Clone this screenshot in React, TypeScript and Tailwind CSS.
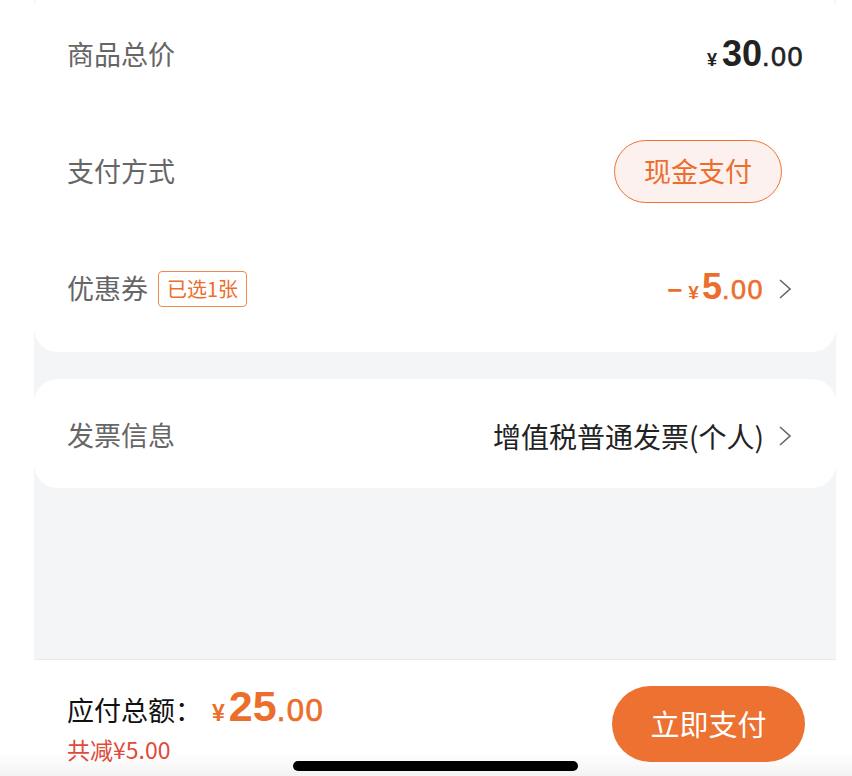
import React from 'react';

const cjk = { fontFamily: '"Noto Sans CJK SC", "Noto Sans", sans-serif' };
const num = { fontFamily: '"Liberation Sans", Arial, sans-serif' };

function Chevron() {
  return (
    <svg width="14" height="22" viewBox="0 0 14 22" className="ml-[14px] mr-[12px] shrink-0">
      <polyline points="2,2 12,11 2,20" fill="none" stroke="#666" strokeWidth="1.6" />
    </svg>
  );
}

function Row({ label, children, extra }: { label: string; children: React.ReactNode; extra?: React.ReactNode }) {
  return (
    <div className="h-[117px] flex items-center justify-between pl-[33px] pr-[32px]">
      <div className="flex items-center">
        <span className="text-[27px] text-[#666]">{label}</span>
        {extra}
      </div>
      <div className="flex items-center">{children}</div>
    </div>
  );
}

export default function App() {
  return (
    <div className="w-[852px] h-[776px] bg-white relative overflow-hidden flex flex-col" style={cjk}>
      <div className="ml-[34px] mr-[16px] h-[660px] bg-[#f4f5f7] border-b border-[#ebebeb] overflow-hidden shrink-0">
        <div className="bg-white rounded-3xl mt-[-14px] pt-[10px] pb-[5px]">
          <Row label="商品总价">
            <span className="text-[#222] flex items-baseline font-semibold" style={num}>
              <span className="text-[18px] mr-[5px]">¥</span>
              <span className="text-[36px] leading-none">30</span>
              <span className="text-[27px] leading-none tracking-[1.5px] font-normal [-webkit-text-stroke:0.6px_#222]">.00</span>
            </span>
          </Row>
          <Row label="支付方式">
            <div className="mr-[22px] h-[63px] w-[168px] rounded-full border-[1.5px] border-[#ee7331] bg-[#fcf1ee] flex items-center justify-center text-[27px] text-[#ec6e2c]">
              现金支付
            </div>
          </Row>
          <Row
            label="优惠券"
            extra={
              <span className="ml-[10px] h-[36px] px-[8px] border border-[#f08a4b] rounded-[4px] text-[#ec6e2c] text-[20px] flex items-center">
                已选1张
              </span>
            }
          >
            <span className="text-[#ec6e2c] flex items-baseline font-semibold" style={num}>
              <span className="text-[26px] leading-none mr-[6px]">−</span>
              <span className="text-[19px] mr-[3px]">¥</span>
              <span className="text-[36px] leading-none">5</span>
              <span className="text-[27px] leading-none tracking-[1.5px] font-normal [-webkit-text-stroke:0.6px_#ec6e2c]">.00</span>
            </span>
            <Chevron />
          </Row>
        </div>
        <div className="bg-white rounded-3xl mt-[27px] h-[109px] flex items-center justify-between pl-[33px] pr-[32px] pt-[4px]">
          <span className="text-[27px] text-[#666]">发票信息</span>
          <div className="flex items-center">
            <span className="text-[28px] text-[#222]">增值税普通发票(个人)</span>
            <Chevron />
          </div>
        </div>
      </div>
      <div className="flex-1 bg-linear-to-b from-white from-80% to-[#f3f3f3] flex items-start justify-between pl-[67px] pr-[47px]">
        <div className="flex flex-col pt-[25px]">
          <div className="flex items-baseline">
            <span className="text-[27px] text-[#111] leading-[40px]">应付总额：</span>
            <span className="text-[#ec6e2c] flex items-baseline font-semibold ml-[10px]" style={num}>
              <span className="text-[23px] mr-[4px]">¥</span>
              <span className="text-[43px] leading-none">25</span>
              <span className="text-[31px] leading-none tracking-[1.5px] font-normal [-webkit-text-stroke:0.7px_#ec6e2c]">.00</span>
            </span>
          </div>
          <span className="text-[23px] text-[#e04a3a] mt-[3px] leading-[30px]">共减¥5.00</span>
        </div>
        <button className="mt-[26px] h-[76px] w-[193px] rounded-full bg-[#ed7130] text-white text-[29px]">
          立即支付
        </button>
      </div>
      <div className="absolute left-[293px] top-[761px] w-[285px] h-[10px] rounded-full bg-black" />
    </div>
  );
}
